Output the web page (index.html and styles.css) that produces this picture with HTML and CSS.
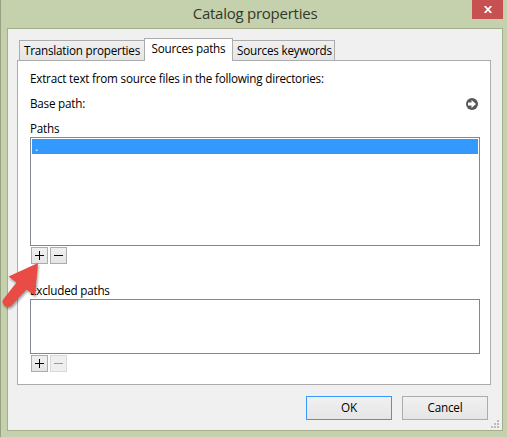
FILE: index.html
```html
<!DOCTYPE html>
<html lang="en">
<head>
<meta charset="utf-8">
<title>Catalog properties</title>
<link rel="stylesheet" href="styles.css">
</head>
<body>
<div class="window">
  <header class="titlebar">
    <h1 class="title">Catalog properties</h1>
    <button class="close" aria-label="Close">
      <svg width="8" height="7" viewBox="0 0 8 7"><path d="M.7 0 7.3 7M7.3 0 .7 7" stroke="#fff" stroke-width="1.8"/></svg>
    </button>
  </header>
  <main class="client">
    <nav class="tabs">
      <div class="tab tab-translation"><span>Translation properties</span></div>
      <div class="tab tab-paths active"><span>Sources paths</span></div>
      <div class="tab tab-keywords"><span>Sources keywords</span></div>
    </nav>
    <section class="panel">
      <p class="line intro"><span>Extract text from source files in the following directories:</span></p>
      <div class="line base">
        <span>Base path:</span>
        <svg width="12" height="12" viewBox="0 0 12 12"><circle cx="6" cy="6" r="6" fill="#58585a"/><path d="M2 4.500H5.500V2L10 6 5.500 10V7.500H2Z" fill="#fff"/></svg>
      </div>
      <p class="line paths-label"><span>Paths</span></p>
      <div class="list list-paths"><div class="selected">.</div></div>
      <div class="tools">
        <button class="tool" aria-label="Add"><svg width="9" height="9"><path d="M0 4.5H9M4.5 0V9" stroke="#000"/></svg></button>
        <button class="tool" aria-label="Remove"><svg width="9" height="9"><path d="M0 4.5H9" stroke="#000"/></svg></button>
      </div>
      <p class="line excluded-label"><span>Excluded paths</span></p>
      <div class="list list-excluded"></div>
      <div class="tools">
        <button class="tool" aria-label="Add"><svg width="9" height="9"><path d="M0 4.5H9M4.5 0V9" stroke="#000"/></svg></button>
        <button class="tool disabled" disabled aria-label="Remove"><svg width="9" height="9"><path d="M0 4.5H9" stroke="#999"/></svg></button>
      </div>
    </section>
    <footer class="actions">
      <button class="action primary">OK</button>
      <button class="action">Cancel</button>
    </footer>
    <svg class="grip" width="8" height="8" fill="#bcbcbc"><path d="M6 0h2v2H6zM3 3h2v2H3zM6 3h2v2H6zM0 6h2v2H0zM3 6h2v2H3zM6 6h2v2H6z"/></svg>
  </main>
  <svg class="pointer" width="50" height="60" viewBox="0 0 50 60"><path class="arrow" d="M38 2 8.500 15.500 16.500 21.500 3.500 38Q1 41.500 4.500 44.500 8.500 47.500 12 44L26.500 28.500 35 34.500Z"/></svg>
</div>
</body>
</html>
```
FILE: styles.css
```css
* { box-sizing: border-box; }
body { margin: 0; font: 11.7px/16px "Open Sans", "Noto Sans", sans-serif; letter-spacing: -.22px; color: #000; }
h1, p { margin: 0; font-weight: 400; }
button { padding: 0; margin: 0; border-radius: 0; font: inherit; letter-spacing: inherit; color: inherit; }
svg { display: block; }
span { white-space: nowrap; }
.window { position: relative; width: 507px; height: 437px; padding: 0 4px 6px 6px; border-left: 1px solid #98a183; background: #c4d1ac; overflow: hidden; }
.titlebar { position: relative; height: 28px; display: flex; justify-content: center; }
.title { font-size: 15px; line-height: 26px; letter-spacing: -.25px; color: #333829; }
.close { position: absolute; top: 0; right: 0; width: 31px; height: 19px; border: 0; background: #c75050; display: grid; place-items: center; }
.client { position: relative; height: 403px; border: 1px solid #a4ae8c; background: #f0f0f0; padding: 9px 11px 0 9px; }
.tabs { display: flex; align-items: flex-end; height: 22px; padding-left: 2px; }
.tab { height: 20px; border: 1px solid #acacac; border-bottom: 0; background: linear-gradient(#f0f0f0, #e5e5e5); padding-top: 1px; text-align: center; }
.tab-translation { width: 125px; border-right: 0; }
.tab-paths { width: 89px; }
.tab-keywords { width: 102px; border-left: 0; padding-left: 2px; }
.tab.active { height: 23px; margin-bottom: -1px; position: relative; background: #fff; }
.panel { width: 474px; height: 325px; border: 1px solid #acacac; background: #fff; padding: 10px 10px 0 12px; }
.line { height: 16px; line-height: 14px; }
.base { display: flex; justify-content: space-between; margin-top: 9px; padding-right: 2px; }
.base svg { margin-top: 2px; }
.paths-label { margin-top: 9px; }
.list { width: 450px; border: 1px solid #828790; padding: 1px; }
.list-paths { height: 109px; }
.selected { height: 15px; background: #3399ff; color: #fff; outline: 1px dotted #c57530; outline-offset: -1px; padding-left: 3px; line-height: 15px; }
.tools { display: flex; gap: 2px; padding: 1px 0 0 1px; }
.tool { width: 17px; height: 17px; border: 1px solid #acacac; background: linear-gradient(#f0f0f0, #e5e5e5); display: grid; place-items: center; }
.tool.disabled { border-color: #d9d9d9; background: #efefef; }
.excluded-label { margin-top: 19px; }
.list-excluded { height: 55px; }
.actions { display: flex; gap: 10px; justify-content: flex-end; padding: 11px 3px 0 0; }
.action { width: 86px; height: 24px; padding-bottom: 2px; border: 1px solid #acacac; background: linear-gradient(#f0f0f0, #e5e5e5); }
.primary { border-color: #3399ff; }
.grip { position: absolute; right: 3px; bottom: 2px; }
.pointer { position: absolute; left: -1px; top: 261px; overflow: visible; }
.arrow { fill: #e84c45; filter: drop-shadow(1px 2px 1px rgba(0,0,0,.35)); }
```
